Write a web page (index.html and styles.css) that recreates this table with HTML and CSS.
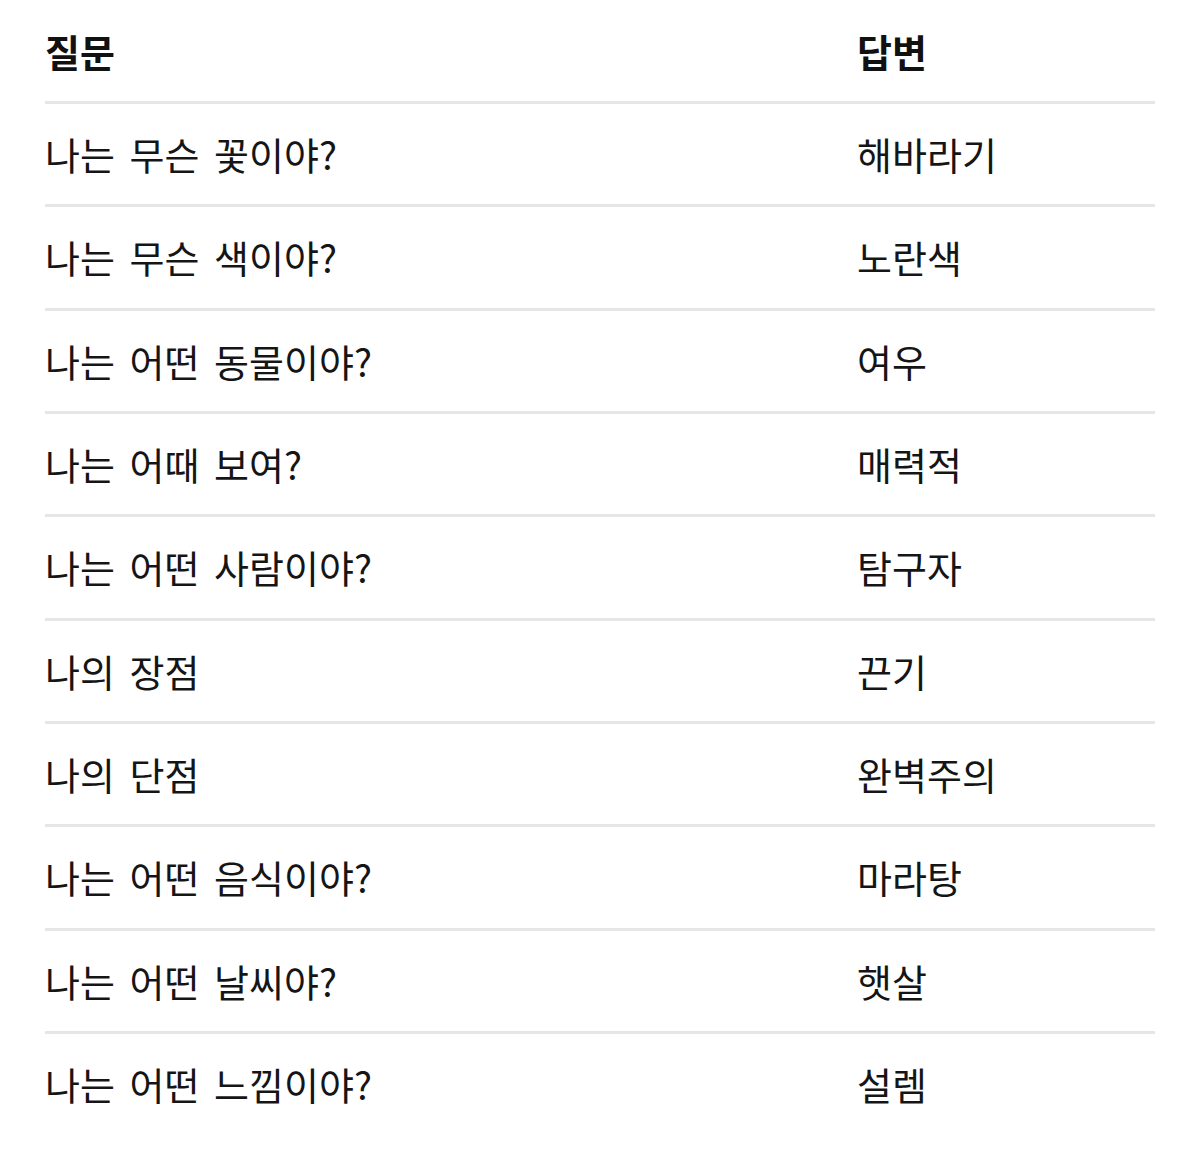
FILE: index.html
```html
<!DOCTYPE html>
<html lang="ko">
<head>
<meta charset="utf-8">
<link rel="stylesheet" href="styles.css">
</head>
<body>
<div class="table">
  <div class="row head"><div class="q">질문</div><div class="a">답변</div></div>
  <div class="row"><div class="q">나는 무슨 꽃이야?</div><div class="a">해바라기</div></div>
  <div class="row"><div class="q">나는 무슨 색이야?</div><div class="a">노란색</div></div>
  <div class="row"><div class="q">나는 어떤 동물이야?</div><div class="a">여우</div></div>
  <div class="row"><div class="q">나는 어때 보여?</div><div class="a">매력적</div></div>
  <div class="row"><div class="q">나는 어떤 사람이야?</div><div class="a">탐구자</div></div>
  <div class="row"><div class="q">나의 장점</div><div class="a">끈기</div></div>
  <div class="row"><div class="q">나의 단점</div><div class="a">완벽주의</div></div>
  <div class="row"><div class="q">나는 어떤 음식이야?</div><div class="a">마라탕</div></div>
  <div class="row"><div class="q">나는 어떤 날씨야?</div><div class="a">햇살</div></div>
  <div class="row last"><div class="q">나는 어떤 느낌이야?</div><div class="a">설렘</div></div>
</div>
</body>
</html>
```
FILE: styles.css
```css
html, body {
  margin: 0;
  padding: 0;
  background: #ffffff;
}
body {
  font-family: "Noto Sans CJK KR", "Noto Sans", sans-serif;
  color: #151515;
}
.table {
  width: 1110px;
  margin-left: 45px;
  display: flex;
  flex-direction: column;
}
.row {
  display: grid;
  grid-template-columns: 812px 1fr;
  align-items: center;
  height: 100.33px;
  border-bottom: 3px solid #e6e6e6;
  font-size: 38px;
  line-height: 1;
  word-spacing: 4px;
}
.row.head {
  height: 101px;
  font-weight: 700;
  color: #111111;
}
.row.last {
  border-bottom: none;
}
.q, .a {
  white-space: nowrap;
}
```
